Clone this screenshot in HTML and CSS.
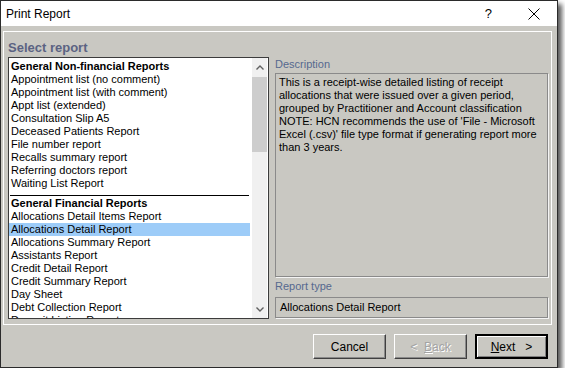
FILE: index.html
```html
<!DOCTYPE html>
<html lang="en">
<head>
  <meta charset="UTF-8">
  <title>Print Report</title>
  <link rel="stylesheet" href="styles.css">
</head>
<body>
  <div class="window">
    <div class="titlebar">
      <span class="title">Print Report</span>
      <span class="help">?</span>
      <svg class="close" width="12" height="12" viewBox="0 0 12 12">
        <path d="M0.5 0.5 L11.5 11.5 M11.5 0.5 L0.5 11.5" stroke="#000" stroke-width="1" fill="none"/>
      </svg>
    </div>

    <div class="client">
      <div class="panel">
        <h1 class="panel-title">Select report</h1>
        <div class="panel-body">
          <div class="listbox">
            <ul class="items">
              <li class="group">General Non-financial Reports</li>
              <li>Appointment list (no comment)</li>
              <li>Appointment list (with comment)</li>
              <li>Appt list (extended)</li>
              <li>Consultation Slip A5</li>
              <li>Deceased Patients Report</li>
              <li>File number report</li>
              <li>Recalls summary report</li>
              <li>Referring doctors report</li>
              <li>Waiting List Report</li>
              <li class="sep"></li>
              <li class="group">General Financial Reports</li>
              <li>Allocations Detail Items Report</li>
              <li class="selected">Allocations Detail Report</li>
              <li>Allocations Summary Report</li>
              <li>Assistants Report</li>
              <li>Credit Detail Report</li>
              <li>Credit Summary Report</li>
              <li>Day Sheet</li>
              <li>Debt Collection Report</li>
              <li>Deposit Listing Report</li>
            </ul>
            <div class="scrollbar">
              <div class="arrow">
                <svg width="8" height="5" viewBox="0 0 8 5"><path d="M0.5 4.5 L4 1 L7.5 4.5" stroke="#606060" stroke-width="1.4" fill="none"/></svg>
              </div>
              <div class="track"><div class="thumb"></div></div>
              <div class="arrow">
                <svg width="8" height="5" viewBox="0 0 8 5"><path d="M0.5 0.5 L4 4 L7.5 0.5" stroke="#606060" stroke-width="1.4" fill="none"/></svg>
              </div>
            </div>
          </div>

          <div class="details">
            <div class="label">Description</div>
            <div class="field desc">This is a receipt-wise detailed listing of receipt allocations that were issued over a given period, grouped by Practitioner and Account classification NOTE: HCN recommends the use of 'File - Microsoft Excel (.csv)' file type format if generating report more than 3 years.</div>
            <div class="label label-gap">Report type</div>
            <div class="field type">Allocations Detail Report</div>
          </div>
        </div>
      </div>

      <div class="buttons">
        <button class="btn">Cancel</button>
        <button class="btn" disabled>&lt;&nbsp;&nbsp;<u>B</u>ack</button>
        <button class="btn default"><u>N</u>ext&nbsp;&nbsp;&nbsp;&gt;</button>
      </div>
    </div>
  </div>
</body>
</html>
```

FILE: styles.css
```css
body {
  margin: 0;
  background-color: #fff;
  font-family: 'Liberation Sans', Arial, sans-serif;
  font-size: 11px;
  color: #000;
}
.window {
  width: 556px;
  height: 366px;
  border: 1px solid #2b2b2b;
  background-color: #c9c8c2;
  box-shadow: 4px 4px 5px rgba(0, 0, 0, 0.65);
}
.titlebar {
  height: 25px;
  background-color: #fff;
  display: flex;
  align-items: center;
}
.title {
  font-size: 12px;
  padding-left: 5px;
  flex: 1;
}
.help {
  font-size: 13px;
  margin-right: 36px;
}
.close {
  margin-right: 17px;
}
.client {
  padding: 5px 5px 0 2px;
}
.panel {
  border: 1px solid #fff;
  padding: 0 2px 5px 4px;
}
.panel-title {
  margin: 0;
  padding: 8px 0 1px 0;
  font-size: 13px;
  line-height: 16px;
  color: #5b6382;
}
.panel-body {
  display: flex;
  gap: 6px;
}
.listbox {
  width: 259px;
  height: 260px;
  border: 1px solid #3c3c3c;
  background-color: #fff;
  display: flex;
  overflow: hidden;
}
.items {
  list-style: none;
  margin: 0;
  padding: 2px 2px 0 0;
  flex: 1;
}
.items li {
  height: 13px;
  line-height: 13px;
  padding-left: 2px;
  white-space: nowrap;
}
.items .group {
  font-weight: bold;
}
.items .selected {
  background-color: #9dccf8;
}
.items .sep {
  height: 6px;
  margin: 0 1px 1px 1px;
  padding: 0;
  border-bottom: 1px solid #000;
  box-sizing: border-box;
}
.scrollbar {
  width: 15px;
  margin-right: 1px;
  background-color: #f0f0f0;
  display: flex;
  flex-direction: column;
}
.arrow {
  height: 18px;
  display: flex;
  align-items: center;
  justify-content: center;
}
.track {
  flex: 1;
}
.thumb {
  height: 75px;
  margin-top: 1px;
  background-color: #cdcdcd;
}
.details {
  width: 274px;
  display: flex;
  flex-direction: column;
}
.label {
  color: #56698f;
  line-height: 13px;
  padding-top: 1px;
  margin-bottom: 2px;
}
.label-gap {
  padding-top: 0;
  margin-top: 3px;
  margin-bottom: 4px;
}
.field {
  border: 1px solid #8a8a8a;
  box-shadow: 1px 1px 0 #f4f4f4;
  line-height: 13px;
}
.desc {
  height: 199px;
  padding: 2px 3px 1px 3px;
  margin-right: 1px;
}
.type {
  height: 19px;
  line-height: 19px;
  padding: 0 4px;
  margin-right: 1px;
}
.buttons {
  display: flex;
  justify-content: flex-end;
  gap: 8px;
  padding: 9px 4px 0 0;
}
.btn {
  width: 73px;
  height: 25px;
  font-family: inherit;
  font-size: 12px;
  background-color: #c9c8c2;
  border: 1px solid;
  border-color: #fff #404040 #404040 #fff;
  box-shadow: inset -1px -1px 0 #8a8a8a;
  padding: 0;
  color: #000;
}
.btn:disabled {
  color: #a3a3a3;
  text-shadow: 1px 1px 0 #fff;
}
.btn.default {
  border: 2px solid #000;
  box-shadow: inset 1px 1px 0 #fff, inset -1px -1px 0 #808080;
}
```
